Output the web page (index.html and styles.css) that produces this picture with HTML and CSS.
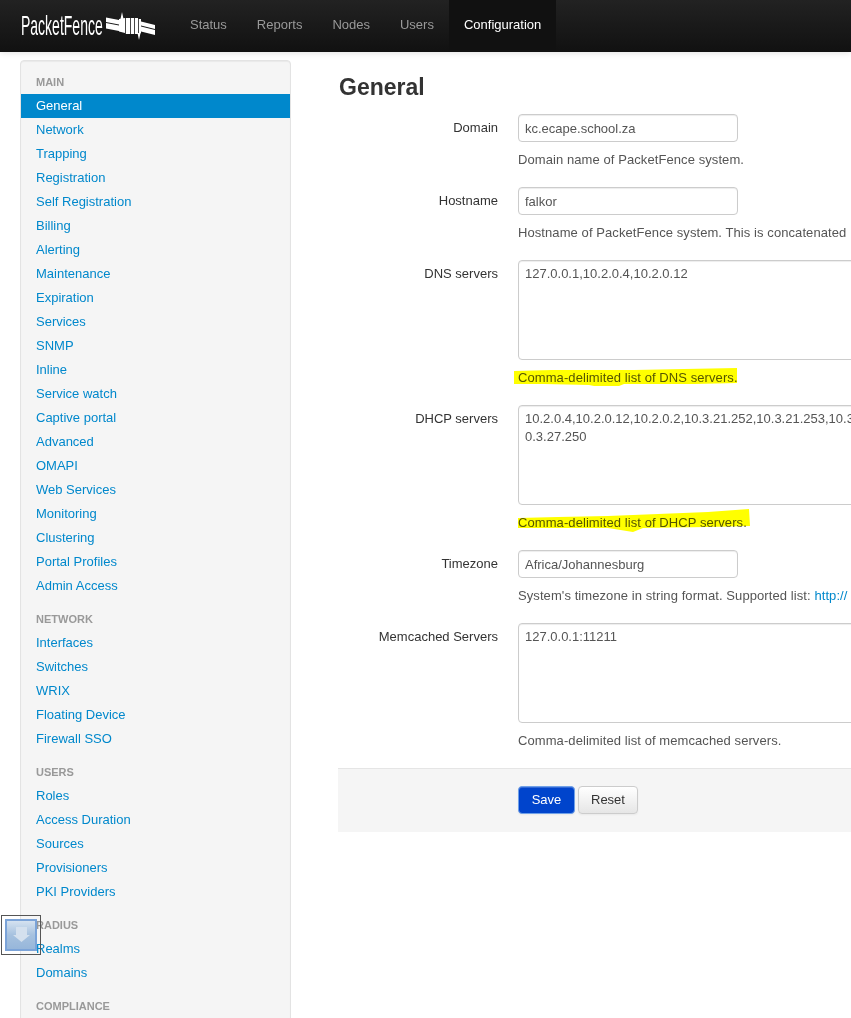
FILE: index.html
```html
<!DOCTYPE html>
<html lang="en">
<head>
<meta charset="utf-8">
<title>PacketFence - General</title>
<link rel="stylesheet" href="styles.css">
</head>
<body>
<header class="navbar">
  <a class="brand">
    <span class="brand-text">PacketFence</span>
    <svg class="brand-mark" width="50" height="30" viewBox="0 0 50 30">
      <g fill="#fff">
        <path d="M0 6.500 13 9V13.500L0 11Z"/>
        <path d="M0 12 13 14.500V20L0 17.500Z"/>
        <path d="M35 10.500 49 14V18L35 14.500Z"/>
        <path d="M35 15.500 49 19V24L35 20.500Z"/>
        <path d="M13 8 19 7V22L13 20.500Z"/>
        <path d="M19.800 7H24V23H19.800Z"/>
        <path d="M24.800 7H28V23H24.800Z"/>
        <path d="M28.800 7H32V23H28.800Z"/>
        <path d="M32.800 8H35V22L32.800 23Z"/>
        <path d="M14.500 8 16 1 17.500 8Z"/>
        <path d="M31.500 22 33 29 34.500 22Z"/>
      </g>
    </svg>
  </a>
  <nav class="topnav">
    <a class="topnav-item">Status</a>
    <a class="topnav-item">Reports</a>
    <a class="topnav-item">Nodes</a>
    <a class="topnav-item">Users</a>
    <a class="topnav-item is-active">Configuration</a>
  </nav>
</header>

<div class="layout">
  <aside class="sidebar">
    <h4 class="side-head">Main</h4>
    <ul class="side-list">
      <li class="is-active"><a>General</a></li>
      <li><a>Network</a></li>
      <li><a>Trapping</a></li>
      <li><a>Registration</a></li>
      <li><a>Self Registration</a></li>
      <li><a>Billing</a></li>
      <li><a>Alerting</a></li>
      <li><a>Maintenance</a></li>
      <li><a>Expiration</a></li>
      <li><a>Services</a></li>
      <li><a>SNMP</a></li>
      <li><a>Inline</a></li>
      <li><a>Service watch</a></li>
      <li><a>Captive portal</a></li>
      <li><a>Advanced</a></li>
      <li><a>OMAPI</a></li>
      <li><a>Web Services</a></li>
      <li><a>Monitoring</a></li>
      <li><a>Clustering</a></li>
      <li><a>Portal Profiles</a></li>
      <li><a>Admin Access</a></li>
    </ul>
    <h4 class="side-head">Network</h4>
    <ul class="side-list">
      <li><a>Interfaces</a></li>
      <li><a>Switches</a></li>
      <li><a>WRIX</a></li>
      <li><a>Floating Device</a></li>
      <li><a>Firewall SSO</a></li>
    </ul>
    <h4 class="side-head">Users</h4>
    <ul class="side-list">
      <li><a>Roles</a></li>
      <li><a>Access Duration</a></li>
      <li><a>Sources</a></li>
      <li><a>Provisioners</a></li>
      <li><a>PKI Providers</a></li>
    </ul>
    <h4 class="side-head">Radius</h4>
    <ul class="side-list">
      <li><a>Realms</a></li>
      <li><a>Domains</a></li>
    </ul>
    <h4 class="side-head">Compliance</h4>
  </aside>

  <main class="content">
    <h2 class="page-title">General</h2>
    <form class="form">
      <div class="field">
        <label class="field-label">Domain</label>
        <div class="field-body">
          <input class="input" type="text" value="kc.ecape.school.za">
          <p class="help">Domain name of PacketFence system.</p>
        </div>
      </div>
      <div class="field">
        <label class="field-label">Hostname</label>
        <div class="field-body">
          <input class="input" type="text" value="falkor">
          <p class="help">Hostname of PacketFence system. This is concatenated</p>
        </div>
      </div>
      <div class="field">
        <label class="field-label">DNS servers</label>
        <div class="field-body">
          <textarea class="textarea">127.0.0.1,10.2.0.4,10.2.0.12</textarea>
          <p class="help"><svg class="marker marker-dns" width="226" height="20" viewBox="0 0 226 20"><path d="M0 3 38 2 72 2 120 2 170 1 223 0 223 15 180 16 110 16 105 18 80 18 75 17 30 16 0 16Z"/></svg>Comma-delimited list of DNS servers.</p>
        </div>
      </div>
      <div class="field">
        <label class="field-label">DHCP servers</label>
        <div class="field-body">
          <textarea class="textarea">10.2.0.4,10.2.0.12,10.2.0.2,10.3.21.252,10.3.21.253,10.3.21.254,1
0.3.27.250</textarea>
          <p class="help"><svg class="marker marker-dhcp" width="236" height="26" viewBox="0 0 236 26"><path d="M0 10 40 9 90 8 140 6 190 4 231 1 232 18 190 19 125 20 115 24 90 20 0 20Z"/></svg>Comma-delimited list of DHCP servers.</p>
        </div>
      </div>
      <div class="field">
        <label class="field-label">Timezone</label>
        <div class="field-body">
          <input class="input" type="text" value="Africa/Johannesburg">
          <p class="help">System's timezone in string format. Supported list: <a class="help-link">http://</a></p>
        </div>
      </div>
      <div class="field">
        <label class="field-label">Memcached Servers</label>
        <div class="field-body">
          <textarea class="textarea">127.0.0.1:11211</textarea>
          <p class="help">Comma-delimited list of memcached servers.</p>
        </div>
      </div>
      <div class="form-actions">
        <button class="btn btn-primary" type="button">Save</button>
        <button class="btn" type="button">Reset</button>
      </div>
    </form>
  </main>
</div>

<div class="scroll-widget">
  <svg width="32" height="32" viewBox="0 0 32 32">
    <defs>
      <linearGradient id="wg" x1="0" y1="0" x2="0" y2="1">
        <stop offset="0" stop-color="#d8e4f1"/>
        <stop offset="0.5" stop-color="#a6c1df"/>
        <stop offset="1" stop-color="#96b6da"/>
      </linearGradient>
    </defs>
    <rect x="1" y="1" width="30" height="30" fill="url(#wg)" stroke="#7ba3d8" stroke-width="2"/>
    <path d="M11 8H22V16H25L16.500 23 8 16H11Z" fill="#d4e0ee"/>
  </svg>
</div>
</body>
</html>
```
FILE: styles.css
```css
* { box-sizing: border-box; }
html, body { height: 100%; overflow: hidden; }
body {
  margin: 0;
  background: #fff;
  color: #333;
  font-family: "Liberation Sans", Arial, sans-serif;
  font-size: 13px;
  line-height: 20px;
}
a { text-decoration: none; }

.navbar {
  display: flex;
  height: 52px;
  background: linear-gradient(#222, #111);
  box-shadow: 0 1px 6px rgba(0, 0, 0, .12);
}
.brand {
  display: flex;
  flex: none;
  width: 175px;
  padding-left: 21px;
  align-items: center;
  color: #fff;
}
.brand-text {
  display: inline-block;
  flex: none;
  width: 83px;
  font-size: 28px;
  line-height: 30px;
  white-space: nowrap;
  transform: scaleX(.5);
  transform-origin: left center;
}
.brand-mark { margin-left: 2px; flex: none; }
.topnav { display: flex; }
.topnav-item {
  padding: 0 15px;
  color: #999;
  font-size: 13px;
  line-height: 49px;
}
.topnav-item.is-active {
  background: #111;
  color: #fff;
}

.layout {
  display: flex;
  align-items: flex-start;
  padding: 8px 0 0 20px;
}
.sidebar {
  flex: none;
  width: 271px;
  padding: 11px 0 40px;
  background: #f5f5f5;
  border: 1px solid #e3e3e3;
  border-radius: 4px;
  box-shadow: inset 0 1px 1px rgba(0, 0, 0, .05);
}
.side-head {
  margin: 0;
  padding: 0 15px;
  color: #999;
  font-size: 11px;
  font-weight: bold;
  line-height: 20px;
  text-transform: uppercase;
}
.side-list {
  margin: 2px 0 11px;
  padding: 0;
  list-style: none;
}
.side-list li a {
  display: block;
  padding: 2px 15px;
  color: #0088cc;
  font-size: 13px;
  line-height: 20px;
}
.side-list li.is-active a {
  background: #0088cc;
  color: #fff;
}

.content {
  flex: none;
  width: 560px;
  margin-left: 47px;
}
.page-title {
  height: 54px;
  margin: 0;
  padding: 7px 0 0 1px;
  color: #333;
  font-size: 23px;
  font-weight: bold;
  line-height: 40px;
}
.field {
  display: flex;
  margin-bottom: 17px;
}
.field-label {
  flex: none;
  width: 160px;
  padding-top: 4px;
  color: #333;
  font-size: 13px;
  text-align: right;
}
.field-body {
  flex: none;
  width: 500px;
  margin-left: 20px;
}
.input, .textarea {
  display: block;
  padding: 4px 6px;
  background: #fff;
  border: 1px solid #ccc;
  border-radius: 4px;
  box-shadow: inset 0 1px 1px rgba(0, 0, 0, .075);
  color: #555;
  font-family: inherit;
  font-size: 13px;
  line-height: 18px;
}
.input { width: 220px; height: 28px; }
.textarea { width: 500px; height: 100px; resize: none; overflow: hidden; white-space: pre; }
.help {
  position: relative;
  margin: 8px 0 0;
  color: #555;
  font-size: 13px;
  letter-spacing: .08px;
  line-height: 20px;
  white-space: nowrap;
}
.help-link { color: #0088cc; }
.marker {
  position: absolute;
  fill: #ffff00;
  mix-blend-mode: multiply;
  pointer-events: none;
}
.marker-dns { left: -4px; top: 0; }
.marker-dhcp { left: 0; top: -5px; }

.form-actions {
  display: flex;
  gap: 3px;
  width: 520px;
  height: 64px;
  padding: 17px 0 0 180px;
  background: #f5f5f5;
  border-top: 1px solid #e5e5e5;
}
.btn {
  height: 28px;
  padding: 0 12px 2px;
  background: linear-gradient(#fff, #e6e6e6);
  border: 1px solid #ccc;
  border-radius: 4px;
  box-shadow: inset 0 1px 0 rgba(255, 255, 255, .2), 0 1px 2px rgba(0, 0, 0, .05);
  color: #333;
  font-family: inherit;
  font-size: 13px;
}
.btn-primary {
  width: 57px;
  background: #0044cc;
  border-color: #6fa0e8;
  color: #fff;
}

.scroll-widget {
  position: fixed;
  left: 1px;
  top: 915px;
  display: flex;
  align-items: center;
  justify-content: center;
  width: 40px;
  height: 40px;
  border: 1px solid #555;
}
```
